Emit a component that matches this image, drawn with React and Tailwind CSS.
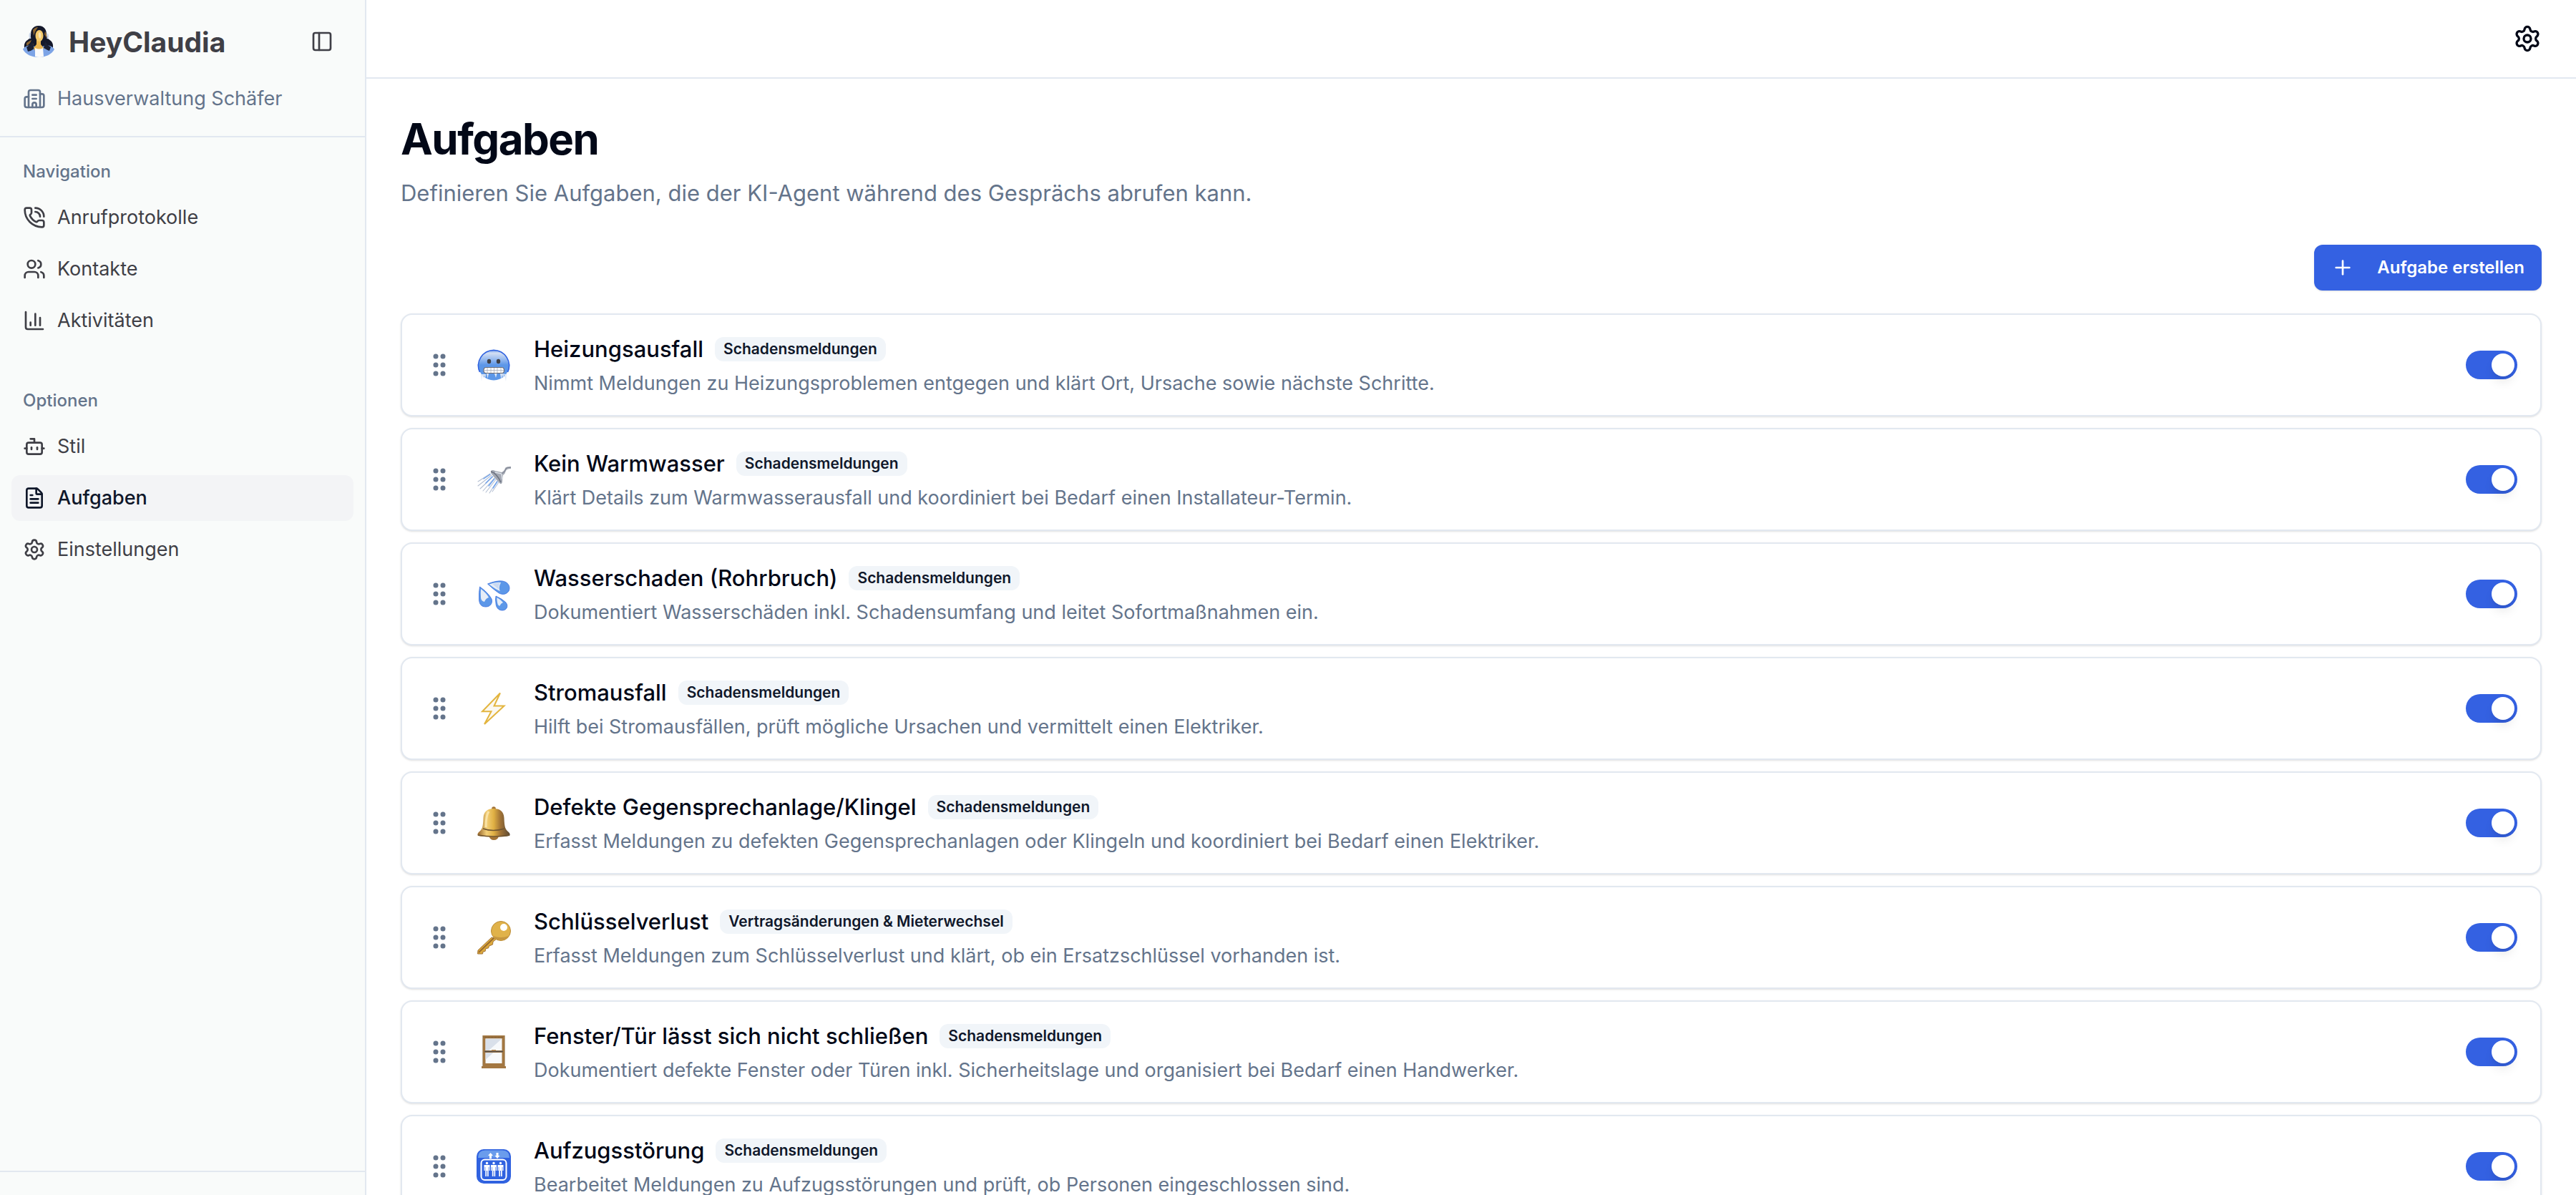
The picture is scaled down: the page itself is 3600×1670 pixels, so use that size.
import { useState } from 'react';
import {
  Bot,
  Building2,
  ChartColumn,
  FileText,
  PanelLeft,
  PhoneCall,
  Plus,
  Settings,
  Users,
} from 'lucide-react';

const navigation = [
  { label: 'Anrufprotokolle', icon: PhoneCall },
  { label: 'Kontakte', icon: Users },
  { label: 'Aktivitäten', icon: ChartColumn },
];

const options = [
  { label: 'Stil', icon: Bot },
  { label: 'Aufgaben', icon: FileText, active: true },
  { label: 'Einstellungen', icon: Settings },
];

const ColdFace = () => (
  <svg viewBox="0 0 48 48" className="size-12" aria-hidden="true">
    <defs>
      <linearGradient id="cold" x1="0" y1="0" x2="0" y2="1">
        <stop offset="0" stopColor="#6f9ae9" />
        <stop offset="0.12" stopColor="#d3dff3" />
        <stop offset="0.35" stopColor="#8db4ee" />
        <stop offset="0.5" stopColor="#5c97e8" />
        <stop offset="1" stopColor="#5c97e8" />
      </linearGradient>
    </defs>
    <circle cx="24" cy="24" r="21.500" fill="url(#cold)" />
    <path d="M4.500 34A21.500 21.500 0 1 1 43.500 34" fill="none" stroke="#3062e0" strokeWidth="1.600" />
    <ellipse cx="17.500" cy="19" rx="2.700" ry="3.300" fill="#3f4046" />
    <ellipse cx="30.500" cy="19" rx="2.700" ry="3.300" fill="#3f4046" />
    <rect x="10" y="27.500" width="28.500" height="8" rx="3.500" fill="#fff" stroke="#6d6f78" strokeWidth="1.200" />
    <path d="M10 31.500h28M15 28v7M20 28v7M24.500 28v7M29 28v7M34 28v7" stroke="#a9adb8" strokeWidth="0.800" />
    <path
      d="M6 37l1 10 1-9 1.500 5 1-5 1.500 5 1-6zM14 36l1.500 7 1.500-7zM25 36l2 6 1.500-6zM33 36l1.500 8 1.500-7 1 6 1.500-6 1.500 5 1 5 1-10z"
      fill="#dfe8f5"
    />
  </svg>
);

const Shower = () => (
  <svg viewBox="0 0 48 48" className="size-12" aria-hidden="true">
    <g strokeLinecap="round">
      <path d="M19 16L2 27M21 18L2 33M23 20L5 37M25 22L9 40M27 24L13 42M29 26L18 43M31 28L22 41" stroke="#b4bfd2" strokeWidth="1.100" />
      <path d="M19 17L10 23M22 20L13 29M25 23L17 33M29 27L23 36" stroke="#6fa3ee" strokeWidth="1.500" />
    </g>
    <path d="M20 12q2-2 6 0l9 2q4-2 5-6 1-2 8-2v3q-6 0-7 3-1 4-4 6l-1 8q0 5-3 4-8-8-13-15z" fill="#a3a8b3" />
    <path d="M20 13q8 2 14 15" fill="none" stroke="#6b7280" strokeWidth="1.600" />
    <path d="M26 14l9 2 1 8" fill="none" stroke="#dfe3ea" strokeWidth="1.400" />
    <path d="M35 16q5-2 6-7 1-2 7-2" fill="none" stroke="#7c8290" strokeWidth="1" />
  </svg>
);

const Droplets = () => (
  <svg viewBox="0 0 48 48" className="size-12" aria-hidden="true">
    <g fill="#5c97e8" stroke="#3b70de" strokeWidth="0.800">
      <path d="M15.500 10Q28 5 36 6c8 1 12 8 9 14-4 6-11 5-15 2Q24 18 15.500 10z" />
      <path d="M4.500 14Q16 22 21 31c2 6-2 11-8 11S4 39 3.500 32Q3 22 4.500 14z" />
      <path d="M27 27Q36 31 41 36c4 5 1 11-5 11s-9-5-9-10q-1-5 0-10z" />
    </g>
    <path d="M17.500 10.500Q27 7 34 8q-4 8-1 12-6-2-15.500-9.500z" fill="#e6edf7" />
    <path d="M6 17Q14 23 17 29q-4 1-6 6-5-1-5-6-.500-6 0-12z" fill="#e6edf7" />
    <path d="M28.500 29Q34 32 37 36q-3 1-5 5-3-2-3-5-.800-4-.500-7z" fill="#e6edf7" />
    <path d="M22 10q6-2 11-1.500-3 5-2 9z" fill="#c9d9f2" />
  </svg>
);

const Lightning = () => (
  <svg viewBox="0 0 48 48" className="size-12" aria-hidden="true">
    <path
      d="M33 2.500L8 28.200H20.500L11 46 38.500 20.500H24.500z"
      fill="#fbf8f0"
      stroke="#e3b53f"
      strokeWidth="2"
      strokeLinejoin="miter"
    />
  </svg>
);

const Bell = () => (
  <svg viewBox="0 0 48 48" className="size-12" aria-hidden="true">
    <defs>
      <linearGradient id="brass" x1="0" y1="0" x2="1" y2="0">
        <stop offset="0.050" stopColor="#a37436" />
        <stop offset="0.280" stopColor="#f3cf78" />
        <stop offset="0.500" stopColor="#e0b043" />
        <stop offset="0.700" stopColor="#a37436" />
        <stop offset="1" stopColor="#5b4a35" />
      </linearGradient>
    </defs>
    <path d="M17 42q2 6 7 6 6 0 7-6z" fill="#a37436" />
    <circle cx="24" cy="4" r="2.800" fill="#a37436" />
    <path d="M24 4c-9 0-14 4-14.500 13C9 30 8 33 3 37c-2 2-2 4-1 5 7 2 37 2 44 0 1-1 1-3-1-5-5-4-6-7-6.500-20C38 8 33 4 24 4z" fill="url(#brass)" />
    <path d="M9 32q14 5 30 0M2 41q22 4 44 0" fill="none" stroke="#6f5430" strokeWidth="1.400" />
    <path d="M17 8q-4 6-4 22" fill="none" stroke="#fae3a5" strokeWidth="3" />
  </svg>
);

const Key = () => (
  <svg viewBox="0 0 48 48" className="size-12" aria-hidden="true">
    <path d="M21 24L2 42l-.500 5h7l.500-3 3-.500 1-4 3.500-.500 1-3 5-2 .500-4 5-4z" fill="#dca93c" stroke="#a37436" strokeWidth="1" />
    <path d="M24 25L3 45" stroke="#96692f" strokeWidth="1.800" />
    <circle cx="34" cy="15" r="13.500" fill="#e0b24a" stroke="#bb8c38" strokeWidth="1" />
    <path d="M23 22a13.500 13.500 0 0 0 22 0q-11 4-22 0z" fill="#c59640" />
    <circle cx="38" cy="10" r="5" fill="#fff" />
  </svg>
);

const WindowFrame = () => (
  <svg viewBox="0 0 48 48" className="size-12" aria-hidden="true">
    <path d="M8 1h32v43h1v3H7v-3h1z" fill="#a37741" />
    <path d="M10 3.500h28" stroke="#5f4a33" strokeWidth="1" strokeDasharray="1 1" />
    <path d="M8.500 1v43M39.500 1v43" stroke="#b9a990" strokeWidth="1" />
    <path d="M12.500 5.500h23V22h-23zM12.500 25h23v15h-23z" fill="#f7f9fb" />
    <path d="M12.500 5.500h23L17 22h-4.500zM12.500 25h11l-11 10z" fill="#d9e0ea" />
    <path d="M11 23.500h26" stroke="#54504f" strokeWidth="1.600" />
    <path d="M21 22h6" stroke="#a37741" strokeWidth="1.600" />
  </svg>
);

const Elevator = () => (
  <svg viewBox="0 0 48 48" className="size-12" aria-hidden="true">
    <rect width="48" height="48" rx="10" fill="#3062e0" />
    <path d="M2 12Q2 1.500 12 1.500h24q10 0 10 10.500z" fill="#6a9cec" />
    <rect x="6.500" y="14.500" width="35" height="28.500" rx="5" fill="none" stroke="#fff" strokeWidth="2" />
    <path d="M19.500 5l3.500 4h-2v4h-3V9h-2zM29 13l-3.500-4h2V5h3v4h2z" fill="#fff" />
    {[14.5, 24, 33.5].map((x) => (
      <g key={x} fill="#fff" transform={`translate(${x} 0)`}>
        <circle cx="0" cy="19.500" r="1.700" />
        <path d="M-4 22h8v8h-1.200v-5h-.6v13h-1.700v-8h-1v8h-1.700V25h-.6v5H-4z" />
      </g>
    ))}
  </svg>
);

const initialTasks = [
  {
    id: 'heizung',
    title: 'Heizungsausfall',
    category: 'Schadensmeldungen',
    description: 'Nimmt Meldungen zu Heizungsproblemen entgegen und klärt Ort, Ursache sowie nächste Schritte.',
    icon: ColdFace,
    enabled: true,
  },
  {
    id: 'warmwasser',
    title: 'Kein Warmwasser',
    category: 'Schadensmeldungen',
    description: 'Klärt Details zum Warmwasserausfall und koordiniert bei Bedarf einen Installateur-Termin.',
    icon: Shower,
    enabled: true,
  },
  {
    id: 'wasserschaden',
    title: 'Wasserschaden (Rohrbruch)',
    category: 'Schadensmeldungen',
    description: 'Dokumentiert Wasserschäden inkl. Schadensumfang und leitet Sofortmaßnahmen ein.',
    icon: Droplets,
    enabled: true,
  },
  {
    id: 'strom',
    title: 'Stromausfall',
    category: 'Schadensmeldungen',
    description: 'Hilft bei Stromausfällen, prüft mögliche Ursachen und vermittelt einen Elektriker.',
    icon: Lightning,
    enabled: true,
  },
  {
    id: 'klingel',
    title: 'Defekte Gegensprechanlage/Klingel',
    category: 'Schadensmeldungen',
    description: 'Erfasst Meldungen zu defekten Gegensprechanlagen oder Klingeln und koordiniert bei Bedarf einen Elektriker.',
    icon: Bell,
    enabled: true,
  },
  {
    id: 'schluessel',
    title: 'Schlüsselverlust',
    category: 'Vertragsänderungen & Mieterwechsel',
    description: 'Erfasst Meldungen zum Schlüsselverlust und klärt, ob ein Ersatzschlüssel vorhanden ist.',
    icon: Key,
    enabled: true,
  },
  {
    id: 'fenster',
    title: 'Fenster/Tür lässt sich nicht schließen',
    category: 'Schadensmeldungen',
    description: 'Dokumentiert defekte Fenster oder Türen inkl. Sicherheitslage und organisiert bei Bedarf einen Handwerker.',
    icon: WindowFrame,
    enabled: true,
  },
  {
    id: 'aufzug',
    title: 'Aufzugsstörung',
    category: 'Schadensmeldungen',
    description: 'Bearbeitet Meldungen zu Aufzugsstörungen und prüft, ob Personen eingeschlossen sind.',
    icon: Elevator,
    enabled: true,
  },
];

const Logo = () => (
  <svg viewBox="0 0 44 44" className="size-11" aria-hidden="true">
    <path d="M22 0c-8 0-11 6-11 12 0 5-2 6-6 9-4 4-4 10-1 13h36c3-3 3-9-1-13-4-3-6-4-6-9C33 6 30 0 22 0z" fill="#14182a" />
    <path d="M14 6q3-4 7-4-4 5-6 12zM5 24q4-3 7-4-2 6-7 8zM31 8q3 4 2 9l-3-5zM8 31q3-5 7-6l-2 5z" fill="#8a6430" />
    <path d="M0 33c2-4 8-6 12-6l10 4 10-4c4 0 10 2 12 6-4 7-12 11-22 11S4 40 0 33z" fill="#7da4e6" />
    <path d="M5 30q5-3 8-8l3 10q-4 3-9 4zM39 30q-5-3-8-8l-2 9q5 3 8 4z" fill="#1b2033" />
    <path d="M19 20h6v6l4 5-3 6h-8l-3-6 4-5z" fill="#ecb650" />
    <ellipse cx="23" cy="14" rx="5.500" ry="8" fill="#f3c96c" />
    <path d="M22 10q2-2 3 1 1 5-1 7-3-2-2-8z" fill="#f8e3b4" />
    <path d="M17 31q6 3 11 0l1 12q-6 2-12 0z" fill="#fbfbfb" />
    <path d="M10.500 10q-2 4 0 8M34 11q2 4 0 7" fill="none" stroke="#c8d3e6" strokeWidth="2" />
  </svg>
);

const DragHandle = () => (
  <svg viewBox="0 0 40 40" className="size-10" fill="currentColor" aria-hidden="true">
    {[8, 20, 32].map((y) => (
      <g key={y}>
        <circle cx="15" cy={y} r="3.500" />
        <circle cx="25" cy={y} r="3.500" />
      </g>
    ))}
  </svg>
);

const NavGroup = ({ title, items }) => (
  <div className="flex flex-col p-4">
    <div className="flex h-16 items-center px-4 text-2xl font-medium text-[#64748b]">{title}</div>
    <ul className="flex flex-col gap-2">
      {items.map(({ label, icon: Icon, active }) => (
        <li key={label}>
          <a
            href="#"
            aria-current={active ? 'page' : undefined}
            className={`flex h-16 items-center gap-4 rounded-xl px-4 text-[27px] ${
              active ? 'bg-[#f3f4f6] font-medium text-[#0f172a]' : 'text-[#3f3f46] hover:bg-[#f3f4f6]'
            }`}
          >
            <Icon className="size-8 shrink-0" />
            <span className="truncate">{label}</span>
          </a>
        </li>
      ))}
    </ul>
  </div>
);

const TaskCard = ({ task, onToggle }) => {
  const Icon = task.icon;

  return (
    <li className="flex items-center rounded-2xl border-2 border-[#e2e8f0] bg-white px-8 py-7 shadow-sm">
      <button type="button" aria-label="Verschieben" className="cursor-grab text-[#64748b]">
        <DragHandle />
      </button>
      <div className="mx-8 shrink-0">
        <Icon />
      </div>
      <div className="flex min-w-0 flex-1 flex-col gap-3">
        <div className="flex h-10 items-center gap-4">
          <h2 id={task.id} className="text-[31px] leading-10 font-medium">
            {task.title}
          </h2>
          <span className="flex h-[34px] items-center rounded-xl bg-[#f1f5f9] px-3 text-[21px] font-semibold text-[#0f172a]">
            {task.category}
          </span>
        </div>
        <p className="text-[27px] leading-8 text-[#64748b]">{task.description}</p>
      </div>
      <button
        type="button"
        role="switch"
        aria-checked={task.enabled}
        aria-labelledby={task.id}
        onClick={() => onToggle(task.id)}
        className={`flex h-10 w-18 shrink-0 items-center rounded-full p-1 ${
          task.enabled ? 'justify-end bg-[#3461e2]' : 'justify-start bg-[#e2e8f0]'
        }`}
      >
        <span className="size-8 rounded-full bg-white shadow-lg" />
      </button>
    </li>
  );
};

export default function App() {
  const [tasks, setTasks] = useState(initialTasks);

  const toggleTask = (id) => {
    setTasks(tasks.map((task) => (task.id === id ? { ...task, enabled: !task.enabled } : task)));
  };

  return (
    <div className="flex h-screen overflow-hidden bg-white font-[Inter,sans-serif] text-[#020817] antialiased">
      <aside className="flex w-128 shrink-0 flex-col border-r-2 border-[#e2e8f0] bg-[#f9fbfa]">
        <div className="flex flex-col gap-9 border-b-2 border-[#e2e8f0] px-8 pt-8 pb-[34px]">
          <div className="flex h-13 items-center justify-between">
            <div className="flex items-center gap-5">
              <Logo />
              <span className="text-[39px] leading-none font-bold text-[#3f3f46]">HeyClaudia</span>
            </div>
            <button type="button" aria-label="Seitenleiste umschalten" className="mr-3 text-[#3f3f46]">
              <PanelLeft className="size-8" />
            </button>
          </div>
          <div className="flex items-center gap-4 text-[27px] leading-9 text-[#64748b]">
            <Building2 className="size-8 shrink-0" />
            <span>Hausverwaltung Schäfer</span>
          </div>
        </div>
        <nav className="flex flex-1 flex-col gap-4">
          <NavGroup title="Navigation" items={navigation} />
          <NavGroup title="Optionen" items={options} />
        </nav>
        <div className="border-t-2 border-[#e2e8f0] p-4" />
      </aside>

      <div className="flex min-w-0 flex-1 flex-col">
        <header className="flex h-[110px] shrink-0 items-center justify-end border-b-2 border-[#e2e8f0] px-12">
          <button type="button" aria-label="Einstellungen">
            <Settings className="size-10" />
          </button>
        </header>

        <main className="flex-1 overflow-y-auto p-12 [scrollbar-width:none]">
          <h1 className="text-6xl leading-18 font-bold tracking-tight">Aufgaben</h1>
          <p className="mt-4 text-[31px] leading-12 text-[#64748b]">
            Definieren Sie Aufgaben, die der KI-Agent während des Gesprächs abrufen kann.
          </p>
          <div className="mt-12 flex justify-end">
            <button
              type="button"
              className="flex h-16 items-center gap-8 rounded-xl bg-[#3461e2] px-6 text-2xl font-semibold text-white shadow-sm"
            >
              <Plus className="size-8" />
              Aufgabe erstellen
            </button>
          </div>
          <ul className="mt-8 flex flex-col gap-4">
            {tasks.map((task) => (
              <TaskCard key={task.id} task={task} onToggle={toggleTask} />
            ))}
          </ul>
        </main>
      </div>
    </div>
  );
}
